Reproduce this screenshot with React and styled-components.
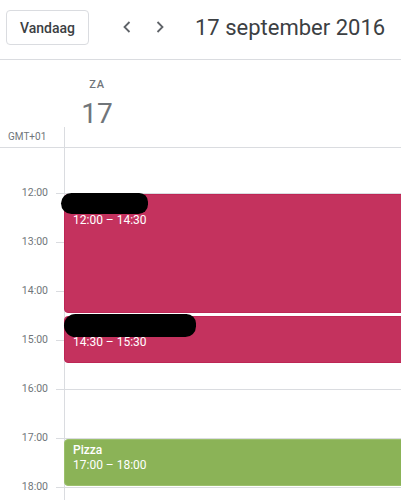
import React from "react"
import styled, { createGlobalStyle } from "styled-components"

const HOUR = 49

const GlobalStyle = createGlobalStyle`
  html, body {
    margin: 0;
    padding: 0;
    background: #fff;
    font-family: Roboto, "Liberation Sans", sans-serif;
  }
`

const Page = styled.div`
  width: 401px;
  height: 500px;
  overflow: hidden;
  display: flex;
  flex-direction: column;
`

const Toolbar = styled.header`
  display: flex;
  align-items: center;
  height: 60px;
  box-sizing: border-box;
  padding: 0 0 0 6px;
  border-bottom: 1px solid #dadce0;
  flex-shrink: 0;
`

const TodayButton = styled.button`
  width: 83px;
  height: 35px;
  margin-top: -4px;
  border: 1px solid #dadce0;
  border-radius: 4px;
  background: #fff;
  color: #3c4043;
  font-family: Roboto, "Liberation Sans", sans-serif;
  font-size: 14px;
  font-weight: 500;
  padding: 0;
`

const NavGroup = styled.div`
  display: flex;
  align-items: center;
  gap: 12px;
  margin: -5px 0 0 27px;
`

const NavButton = styled.span`
  display: flex;
  width: 21px;
  height: 21px;
  align-items: center;
  justify-content: center;
  color: #5f6368;
`

const Title = styled.h1`
  margin: -5px 0 0 25px;
  font-size: 22px;
  font-weight: 400;
  color: #3c4043;
  white-space: nowrap;
`

const DayHead = styled.div`
  flex-shrink: 0;
`

const DayLabel = styled.div`
  width: 66px;
  margin-left: 64px;
  padding-top: 17px;
  text-align: center;
  color: #70757a;
`

const Weekday = styled.div`
  font-size: 11px;
  line-height: 16px;
  font-weight: 500;
  letter-spacing: 0.8px;
`

const DayNumber = styled.div`
  margin-top: 8px;
  font-size: 28px;
  line-height: 26px;
`

const ZoneRow = styled.div`
  display: grid;
  grid-template-columns: 64px 1fr;
  height: 20px;
`

const Zone = styled.div`
  font-size: 10px;
  color: #70757a;
  padding-left: 8px;
  line-height: 20px;
`

const ZoneGap = styled.div`
  border-left: 1px solid #dadce0;
`

const Body = styled.div`
  flex: 1;
  overflow: hidden;
  border-top: 1px solid #dadce0;
`

const Grid = styled.div`
  position: relative;
  margin-top: -4px;
`

const HourRow = styled.div`
  display: grid;
  grid-template-columns: 64px 1fr;
  height: ${HOUR}px;
`

const Gutter = styled.div`
  display: flex;
  align-items: flex-start;
`

const HourLabel = styled.span`
  width: 48px;
  margin-top: -6px;
  text-align: right;
  font-size: 10.5px;
  line-height: 12px;
  color: #70757a;
`

const Tick = styled.span`
  flex: 1;
  margin-left: 8px;
  border-top: 1px solid #dadce0;
`

const Slot = styled.div`
  border-top: 1px solid #dadce0;
  border-left: 1px solid #dadce0;
`

const Events = styled.div`
  position: absolute;
  top: 0;
  bottom: 0;
  left: 64px;
  right: -4px;
`

const Event = styled.div`
  position: absolute;
  left: 0;
  right: 0;
  box-sizing: border-box;
  padding: 3px 8px;
  border-radius: 4px;
  border: 1px solid ${p => p.$edge};
  background: ${p => p.$color};
  color: #fff;
  font-size: 12px;
  line-height: 15px;
`

const EventTitle = styled.div`
  font-weight: 500;
  height: 15px;
`

const Redacted = styled.span`
  display: block;
  position: absolute;
  background: #000;
  border-radius: 12px 10px 11px 12px;
`

const hours = [11, 12, 13, 14, 15, 16, 17, 18, 19]

const events = [
  { title: "", time: "12:00 – 14:30", top: 50, height: 119, color: "#c4325e", edge: "#bd2655", blot: { left: -4, top: -2, width: 87, height: 21 } },
  { title: "", time: "14:30 – 15:30", top: 172, height: 47, color: "#c4325e", edge: "#bd2655", blot: { left: -1, top: -3, width: 132, height: 23 } },
  { title: "Pizza", time: "17:00 – 18:00", top: 295, height: 47, color: "#8bb357", edge: "#9cc06c" },
]

const Chevron = ({ dir }) => (
  <svg width="10" height="12" viewBox="0 0 10 12" fill="none">
    <path
      d={dir === "left" ? "M7.5 1 L2.5 6 L7.5 11" : "M2.5 1 L7.5 6 L2.5 11"}
      stroke="currentColor"
      strokeWidth="1.8"
    />
  </svg>
)

const App = () => {
  return (
    <>
      <GlobalStyle />
      <Page>
        <Toolbar>
          <TodayButton>Vandaag</TodayButton>
          <NavGroup>
            <NavButton><Chevron dir="left" /></NavButton>
            <NavButton><Chevron dir="right" /></NavButton>
          </NavGroup>
          <Title>17 september 2016</Title>
        </Toolbar>
        <DayHead>
          <DayLabel>
            <Weekday>ZA</Weekday>
            <DayNumber>17</DayNumber>
          </DayLabel>
          <ZoneRow>
            <Zone>GMT+01</Zone>
            <ZoneGap />
          </ZoneRow>
        </DayHead>
        <Body>
          <Grid>
            {hours.map(h => (
              <HourRow key={h}>
                <Gutter>
                  <HourLabel>{h}:00</HourLabel>
                  <Tick />
                </Gutter>
                <Slot />
              </HourRow>
            ))}
            <Events>
              {events.map(e => (
                <Event
                  key={e.time}
                  $color={e.color}
                  $edge={e.edge}
                  style={{ top: e.top, height: e.height }}
                >
                  <EventTitle>{e.title}</EventTitle>
                  <div>{e.time}</div>
                  {e.blot && <Redacted style={e.blot} />}
                </Event>
              ))}
            </Events>
          </Grid>
        </Body>
      </Page>
    </>
  )
}

export default App
